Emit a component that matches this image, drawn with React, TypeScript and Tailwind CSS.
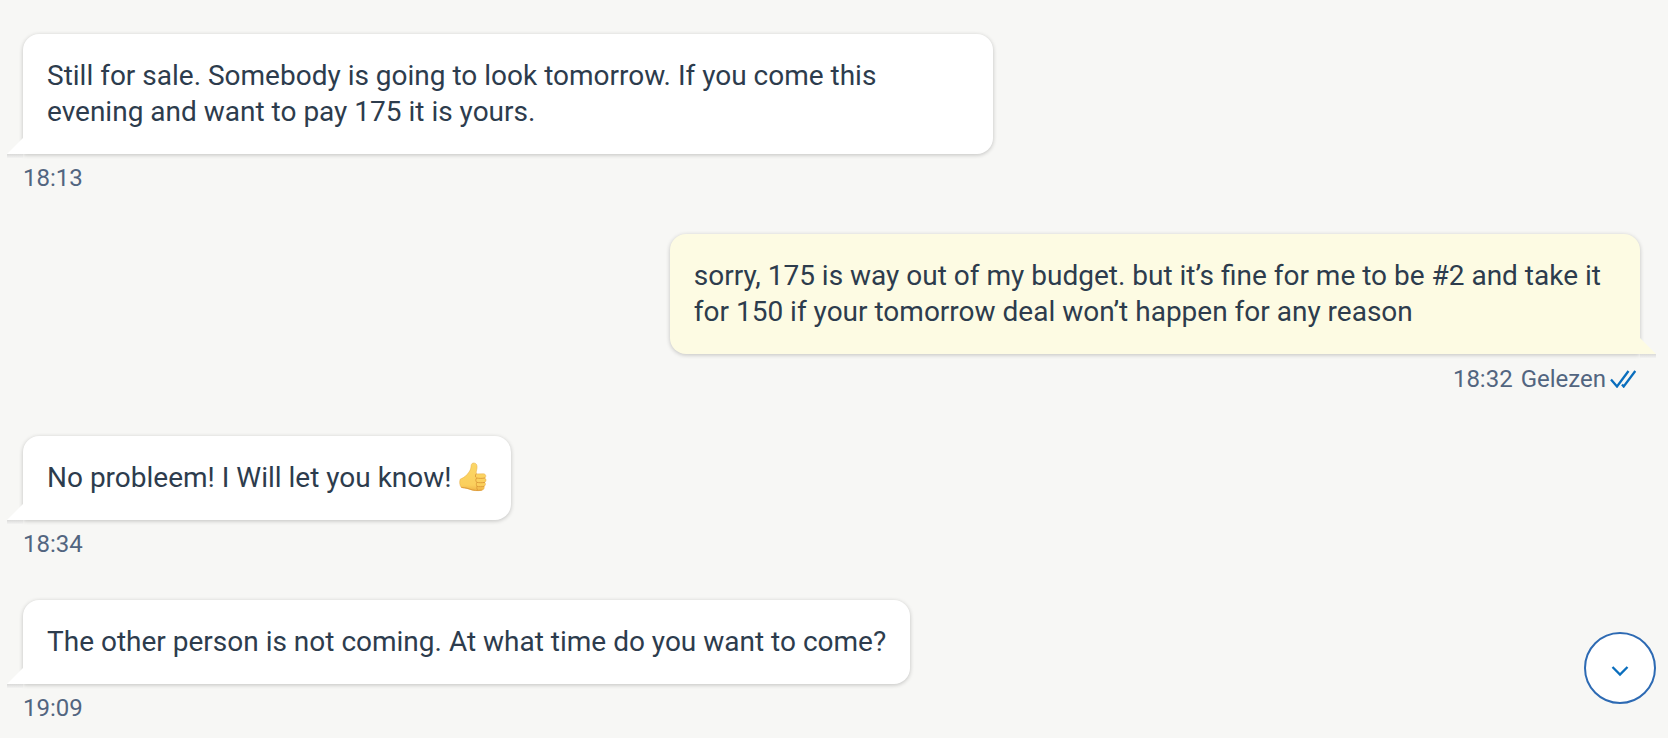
import clsx from "clsx"

type Message = {
  id: number
  text: string
  time: string
  mine?: boolean
  read?: boolean
  thumbsUp?: boolean
}

const messages: Message[] = [
  {
    id: 1,
    text: "Still for sale. Somebody is going to look tomorrow. If you come this evening and want to pay 175 it is yours.",
    time: "18:13",
  },
  {
    id: 2,
    text: "sorry, 175 is way out of my budget. but it’s fine for me to be #2 and take it for 150 if your tomorrow deal won’t happen for any reason",
    time: "18:32",
    mine: true,
    read: true,
  },
  { id: 3, text: "No probleem! I Will let you know!", time: "18:34", thumbsUp: true },
  { id: 4, text: "The other person is not coming. At what time do you want to come?", time: "19:09" },
]

const ThumbsUp = () => (
  <svg viewBox="0 0 28 30" className="inline-block h-[30px] w-7 align-[-5px]" role="img" aria-label="thumbs up">
    <defs>
      <linearGradient id="thumb" x1="0" y1="0" x2="0" y2="1">
        <stop offset="0" stopColor="#fbd768" />
        <stop offset="0.8" stopColor="#fbcf5c" />
        <stop offset="1" stopColor="#efb346" />
      </linearGradient>
    </defs>
    <path
      d="M1.200 17.200C3.500 16.200 6 15 8 12.600C10 10.200 11.800 8 12 5C12 2.700 12.600 1 14.600 1C17.800 1 18.500 4 17.900 6.800C17.500 8.800 17 10.500 17.200 11.900L24.600 11.800C27.200 12 27.400 15.300 25.700 16C27.600 16.800 27.400 19.800 25.600 20.400C27.100 21.400 26.500 23.900 24.900 24.400C25.800 25.900 24.800 27.900 22.800 28.300C18.500 29 14 28.700 10.500 27.200C7 25.800 4 26 2.400 25.500C.6 23.500 .2 19.800 1.200 17.200Z"
      fill="url(#thumb)"
      stroke="#e6aa42"
      strokeWidth="0.500"
    />
    <path
      d="M25.700 16C23 16.600 20.500 16.500 18.200 16.100M25.600 20.400C23 20.900 20.500 20.800 18 20.400M24.900 24.400C22.500 24.900 20.300 24.800 18 24.400M17.200 11.900C16 13.200 16 15 17.700 16C16.400 17.400 16.500 19.300 18 20.300C17 21.600 17.200 23.500 18.200 24.400C17.500 25.600 17.700 27.200 19 28.200"
      fill="none"
      stroke="#dc9a38"
      strokeWidth="0.900"
      strokeLinecap="round"
    />
    <path
      d="M2.400 25.300C4 25.800 7 25.600 10.500 27C14 28.500 18.500 28.800 22.800 28.100"
      fill="none"
      stroke="#dc9a38"
      strokeWidth="0.900"
    />
  </svg>
)

const ReadTicks = () => (
  <svg viewBox="0 0 26 18" className="h-[18px] w-[26px]" fill="none" stroke="#0a6ebd" strokeWidth="2.300" aria-hidden="true">
    <path d="M1 9.500L7 16.500L18.500 1M12 14.500L13.700 16.500L25.300 1" />
  </svg>
)

const Bubble = ({ message }: { message: Message }) => (
  <div
    className={clsx(
      "relative max-w-[60%] rounded-2xl p-6 text-[28px] leading-9 text-[#2d3c4d] shadow-[0_1px_4px_rgba(0,0,0,0.22)]",
      message.mine ? "rounded-br-none bg-[#fdfbe3]" : "rounded-bl-none bg-white"
    )}
  >
    <p>
      {message.text}
      {message.thumbsUp && (
        <>
          {" "}
          <ThumbsUp />
        </>
      )}
    </p>
    {/* tail */}
    <svg
      viewBox="0 0 16 20"
      className={clsx("absolute -bottom-1 h-5 w-4", message.mine ? "left-full -scale-x-100" : "right-full")}
      aria-hidden="true"
    >
      <defs>
        <linearGradient id={`tail-${message.id}`} x1="0" y1="0" x2="0" y2="1">
          <stop offset="0" stopColor="#d9d9d8" />
          <stop offset="1" stopColor="#f3f3f2" />
        </linearGradient>
      </defs>
      <path d="M16 0V16H0Z" fill={message.mine ? "#fdfbe3" : "#ffffff"} />
      <path d="M0 16H16V20H0Z" fill={`url(#tail-${message.id})`} />
    </svg>
  </div>
)

const App = () => {
  return (
    <main className="relative min-h-screen bg-[#f7f7f5] pt-[34px] pr-7 pl-[23px] font-[Roboto,sans-serif]">
      <ul className="flex flex-col gap-10">
        {messages.map((message) => (
          <li key={message.id} className={clsx("flex flex-col gap-2", message.mine ? "items-end" : "items-start")}>
            <Bubble message={message} />
            <div
              className={clsx(
                "flex items-center text-2xl text-[#526580]",
                message.mine ? "gap-2 pr-1 leading-[34px]" : "leading-8"
              )}
            >
              <time>{message.time}</time>
              {message.read && (
                <span className="flex items-center gap-1">
                  Gelezen
                  <ReadTicks />
                </span>
              )}
            </div>
          </li>
        ))}
      </ul>
      <button
        type="button"
        aria-label="Scroll down"
        className="fixed right-3 bottom-[34px] flex size-[72px] items-center justify-center rounded-full border-2 border-[#2d6ab3] bg-white"
      >
        <svg viewBox="0 0 24 24" className="size-6" fill="none" stroke="#0a6ebd" strokeWidth="2.300" aria-hidden="true">
          <path d="M4.500 11L12 18.500L19.500 11" />
        </svg>
      </button>
    </main>
  )
}

export default App
